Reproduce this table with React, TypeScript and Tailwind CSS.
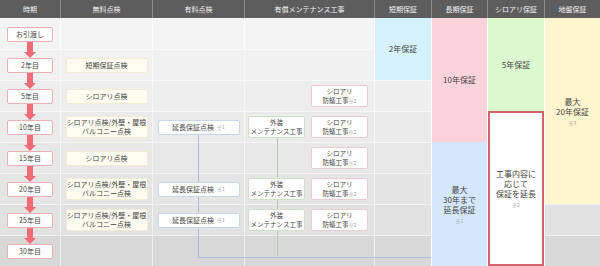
import type { ReactNode } from "react";

const periods = ["お引渡し", "2年目", "5年目", "10年目", "15年目", "20年目", "25年目", "30年目"];

const rowBg = [
  "bg-[#f4f4f4]",
  "bg-[#f1f1f1]",
  "bg-[#eeeeee]",
  "bg-[#ebebeb]",
  "bg-[#e8e8e8]",
  "bg-[#e5e5e5]",
  "bg-[#e2e2e2]",
  "bg-[#d8d8d8]",
];

const twoLine = ["シロアリ点検/外壁・屋根", "バルコニー点検"];

const freeChecks: (string | string[] | null)[] = [
  null,
  "短期保証点検",
  "シロアリ点検",
  twoLine,
  "シロアリ点検",
  twoLine,
  twoLine,
  null,
];

const paidRows = [3, 5, 6];
const exteriorRows = [3, 5, 6];
const termiteRows = [2, 3, 4, 5, 6];

const headers = [
  { label: "時期", w: "w-[60px]" },
  { label: "無料点検", w: "w-[92px]" },
  { label: "有料点検", w: "w-[92px]" },
  { label: "有償メンテナンス工事", w: "w-[130px]" },
  { label: "短期保証", w: "w-[57px]" },
  { label: "長期保証", w: "w-[56px]" },
  { label: "シロアリ保証", w: "w-[57px]" },
  { label: "地盤保証", w: "w-[56px]" },
];

function Note({ children }: { children: ReactNode }) {
  return <span className="ml-[3px] text-[5px] text-[#999]">{children}</span>;
}

function Arrow() {
  return (
    <svg className="absolute left-[24px] top-[23px] z-10" width="12" height="16" viewBox="0 0 12 16">
      <rect x="3" y="0" width="6" height="10" fill="#f26b76" />
      <polygon points="0,10 12,10 6,16" fill="#f26b76" />
    </svg>
  );
}

function FreeBox({ value }: { value: string | string[] }) {
  const lines = Array.isArray(value) ? value : [value];
  return (
    <div
      className={`relative z-10 flex w-[82px] flex-col items-center justify-center whitespace-nowrap rounded-[2px] border border-[#f1ecd2] bg-[#fffdf1] text-[7px] leading-[9px] text-[#444] ${
        lines.length > 1 ? "h-[22px]" : "h-[15px]"
      }`}
    >
      {lines.map((l) => (
        <span key={l}>{l}</span>
      ))}
    </div>
  );
}

function WorkBox({ kind }: { kind: "exterior" | "termite" }) {
  const exterior = kind === "exterior";
  return (
    <div
      className={`relative z-10 flex h-[22px] w-[57px] flex-col items-center justify-center whitespace-nowrap rounded-[2px] border bg-white text-[6.5px] leading-[9px] text-[#444] ${
        exterior ? "border-[#cfe2c9]" : "border-[#ecccd1]"
      }`}
    >
      {exterior ? (
        <>
          <span>外装</span>
          <span>メンテナンス工事</span>
        </>
      ) : (
        <>
          <span>シロアリ</span>
          <span>
            防蟻工事<span className="text-[5px] text-[#999]">※2</span>
          </span>
        </>
      )}
    </div>
  );
}

function Coverage({ lines, note }: { lines: string[]; note?: string }) {
  return (
    <div className="flex flex-col items-center text-[8px] leading-[10px] text-[#444]">
      {lines.map((l) => (
        <span key={l}>{l}</span>
      ))}
      {note && <span className="mt-[2px] text-[5px] leading-[7px] text-[#999]">{note}</span>}
    </div>
  );
}

export default function App() {
  return (
    <div
      className="h-[266px] w-[600px] overflow-hidden bg-[#eeeeee]"
      style={{ fontFamily: '"Noto Sans CJK JP", "Noto Sans", sans-serif' }}
    >
      <div className="flex h-[18px] bg-[#5d5d5d]">
        {headers.map((h, i) => (
          <div
            key={h.label}
            className={`${h.w} flex items-center justify-center text-[7px] text-[#f2f2f2] ${
              i > 0 ? "border-l border-[#8c8c8c]" : ""
            }`}
          >
            {h.label}
          </div>
        ))}
      </div>

      <div className="relative flex">
        <div className="grid w-[374px] grid-cols-[60px_92px_92px_130px]">
          {periods.map((p, i) => (
            <div key={p} className="contents">
              <div className={`relative flex h-[31px] items-center justify-center border-t border-white/60 ${rowBg[i]}`}>
                <div className="flex h-[15px] w-[46px] items-center justify-center rounded-[2px] border border-[#ecb0b6] bg-white text-[7px] text-[#444]">
                  {p}
                </div>
                {i < periods.length - 1 && <Arrow />}
              </div>
              <div className={`flex h-[31px] items-center justify-center border-l border-t border-white/60 ${rowBg[i]}`}>
                {freeChecks[i] && <FreeBox value={freeChecks[i]!} />}
              </div>
              <div className={`flex h-[31px] items-center justify-center border-l border-t border-white/60 ${rowBg[i]}`}>
                {paidRows.includes(i) && (
                  <div className="relative z-10 flex h-[15px] w-[82px] items-center justify-center rounded-[2px] border border-[#c9d6ea] bg-white text-[7px] text-[#444]">
                    延長保証点検<Note>※1</Note>
                  </div>
                )}
              </div>
              <div className={`flex h-[31px] items-center gap-[6px] border-l border-t border-white/60 pl-[3px] ${rowBg[i]}`}>
                <div className="w-[57px]">{exteriorRows.includes(i) && <WorkBox kind="exterior" />}</div>
                <div className="w-[57px]">{termiteRows.includes(i) && <WorkBox kind="termite" />}</div>
              </div>
            </div>
          ))}
        </div>

        <div className="flex w-[57px] flex-col">
          <div className="flex h-[62px] items-center justify-center border-l border-white bg-[#d5f1fc]">
            <Coverage lines={["2年保証"]} />
          </div>
          {rowBg.slice(2).map((bg, i) => (
            <div key={i} className={`h-[31px] border-l border-t border-white/60 ${bg}`} />
          ))}
        </div>

        <div className="flex w-[56px] flex-col border-l border-white">
          <div className="flex h-[124px] items-center justify-center bg-[#fdd3db]">
            <Coverage lines={["10年保証"]} />
          </div>
          <div className="flex h-[124px] items-center justify-center bg-[#d4e7fb]">
            <Coverage lines={["最大", "30年まで", "延長保証"]} note="※1" />
          </div>
        </div>

        <div className="flex w-[57px] flex-col border-l border-white">
          <div className="flex h-[93px] items-center justify-center bg-[#dcf8cf]">
            <Coverage lines={["5年保証"]} />
          </div>
          <div className="flex h-[155px] items-center justify-center border-2 border-[#d4636e] bg-white">
            <Coverage lines={["工事内容に", "応じて", "保証を延長"]} note="※2" />
          </div>
        </div>

        <div className="flex w-[56px] flex-col border-l border-white">
          <div className="flex h-[186px] items-center justify-center bg-[#fff6cf]">
            <Coverage lines={["最大", "20年保証"]} note="※3" />
          </div>
          <div className={`h-[31px] border-t border-white/60 ${rowBg[6]}`} />
          <div className={`h-[31px] border-t border-white/60 ${rowBg[7]}`} />
        </div>

        <div className="absolute left-[198px] top-[115px] z-0 h-[124px] w-px bg-[#a9bde0]" />
        <div className="absolute left-[198px] top-[239px] z-0 h-px w-[233px] bg-[#a9bde0]" />
        <div className="absolute left-[277px] top-[119px] z-0 h-[120px] w-px bg-[#b9cbb5]" />
      </div>
    </div>
  );
}
